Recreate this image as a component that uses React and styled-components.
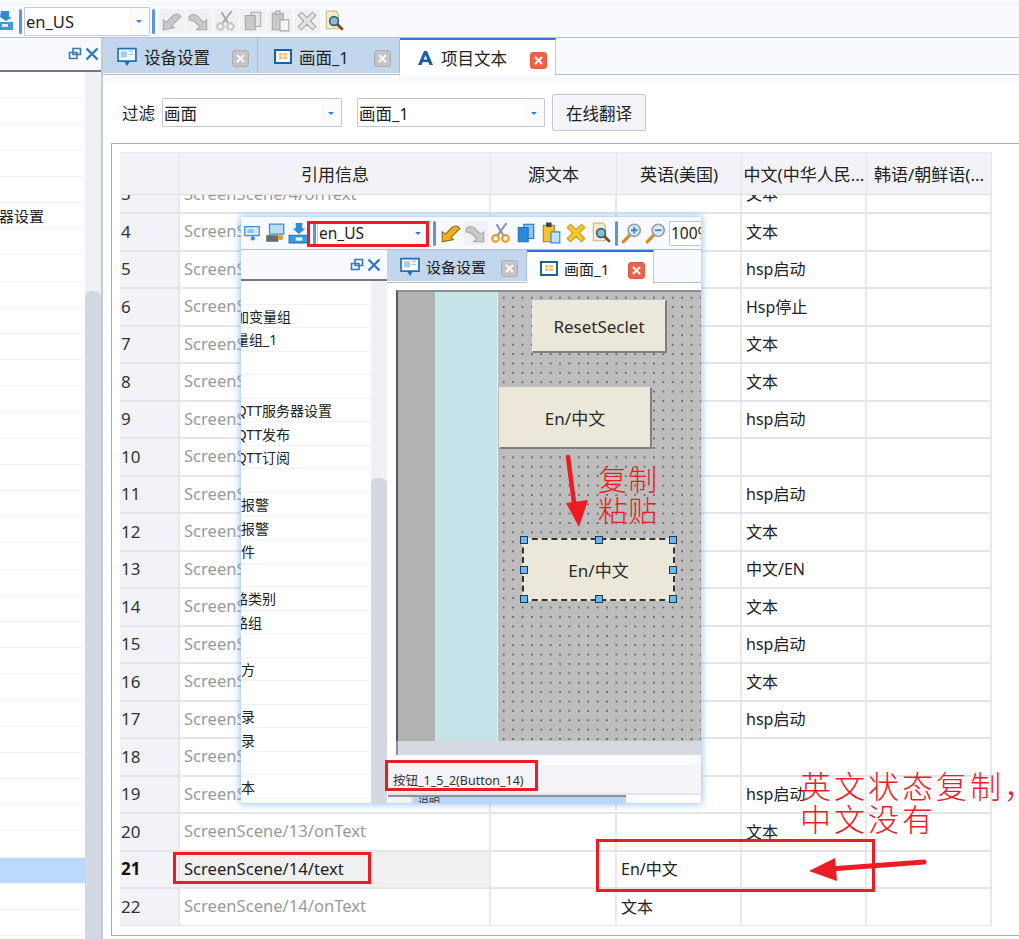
import React from 'react';
import styled, { createGlobalStyle } from 'styled-components';

const GlobalStyle = createGlobalStyle`
  html, body {
    margin: 0;
    padding: 0;
    background: #fff;
    overflow: hidden;
  }
  * { box-sizing: border-box; }
  body {
    font-family: "Noto Sans", "Noto Sans CJK SC", sans-serif;
    color: #222;
  }
`;

const Page = styled.div`
  position: relative;
  width: 1019px;
  height: 939px;
  overflow: hidden;
  background: #fff;
  display: flex;
  flex-direction: column;
`;

const TopStrip = styled.div`
  height: 5px;
  flex: none;
  background: #fbfbfe;
  border-bottom: 1px solid #f0f1f7;
`;

const Toolbar = styled.div`
  flex: none;
  display: flex;
  align-items: center;
  height: ${p => p.$height || 33}px;
  background: #f9fafe;
  border-bottom: 1px solid #b9bdd0;
  overflow: hidden;
`;

const IconSlot = styled.div`
  flex: none;
  width: ${p => p.$w || 24}px;
  height: 24px;
  margin-left: ${p => p.$ml || 0}px;
  margin-right: ${p => p.$mr || 0}px;
  display: flex;
  align-items: center;
  justify-content: center;
  background: ${p => (p.$disabled ? '#f1f1f3' : 'transparent')};
`;

const Grip = styled.div`
  flex: none;
  width: 3px;
  height: 25px;
  margin: 0 ${p => p.$mr || 3}px 0 ${p => p.$ml || 3}px;
  border-radius: 2px;
  background: #5b96dc;
`;

const Combo = styled.div`
  flex: none;
  display: flex;
  align-items: center;
  justify-content: space-between;
  width: ${p => p.$w}px;
  height: ${p => p.$h || 29}px;
  padding-left: 1px;
  background: #fff;
  border: 1px solid #c3c7d8;
  border-radius: 1px;
  font-size: ${p => p.$size || 16.5}px;
  color: #222;
  white-space: nowrap;
  overflow: hidden;
`;

const ComboArrow = styled.span`
  flex: none;
  width: 20px;
  align-self: stretch;
  position: relative;
  background: #fbfbfe;
  &::after {
    content: '';
    position: absolute;
    left: 7px;
    top: 50%;
    margin-top: -1px;
    border: 3px solid transparent;
    border-top: 3px solid #3a78d8;
    border-bottom: 0;
  }
`;

const Workspace = styled.div`
  flex: 1;
  min-height: 0;
  display: flex;
`;

const SidePanel = styled.div`
  flex: none;
  width: ${p => p.$w}px;
  display: flex;
  flex-direction: column;
  min-height: 0;
  border-right: ${p => (p.$border ? '2px solid #c7cad6' : 'none')};
  background: #fff;
`;

const PanelHeader = styled.div`
  flex: none;
  height: ${p => p.$h}px;
  display: flex;
  align-items: center;
  justify-content: flex-end;
  gap: 3px;
  padding-right: 2px;
  background: #f9fafe;
  border-bottom: 2px solid #75787f;
`;

const PanelBody = styled.div`
  flex: 1;
  min-height: 0;
  display: flex;
`;

const TreeList = styled.div`
  flex: 1;
  min-width: 0;
  overflow: hidden;
`;

const TreeRow = styled.div`
  height: ${p => p.$h}px;
  display: flex;
  align-items: center;
  white-space: nowrap;
  overflow: hidden;
  font-size: ${p => p.$size || 15}px;
  color: #222;
  background: ${p => (p.$selected ? '#bbd9fb' : '#fff')};
  border-bottom: 1px solid #f1f2f8;
`;

const TreeLabel = styled.span`
  margin-left: ${p => p.$shift}px;
`;

const ScrollTrack = styled.div`
  flex: none;
  width: ${p => p.$w}px;
  background: #f0f1f4;
  padding-top: ${p => p.$top}px;
  display: flex;
`;

const ScrollThumb = styled.div`
  flex: 1;
  background: #d3d9e3;
  border-radius: 6px 6px 0 0;
`;

const MainArea = styled.div`
  flex: 1;
  min-width: 0;
  display: flex;
  flex-direction: column;
`;

const TabBar = styled.div`
  flex: none;
  height: ${p => p.$h}px;
  display: flex;
  padding-left: ${p => p.$pl || 0}px;
  background: #f9fafe;
  border-bottom: 1px solid #b9bdd0;
`;

const Tab = styled.div`
  flex: none;
  width: ${p => p.$w}px;
  height: ${p => (p.$active ? p.$h + 3 : p.$h)}px;
  padding: 0 8px 0 ${p => p.$pl || 14}px;
  display: flex;
  align-items: center;
  gap: ${p => p.$gap || 7}px;
  position: relative;
  z-index: ${p => (p.$active ? 1 : 0)};
  font-size: ${p => p.$size || 16.5}px;
  color: #222;
  background: ${p => (p.$active ? '#fff' : '#c2d6ee')};
  border-top: 2px solid ${p => (p.$active ? '#2e74d3' : '#c2d6ee')};
  border-right: 1px solid ${p => (p.$active ? '#c3c7d8' : '#a9bdd6')};
`;

const TabText = styled.span`
  flex: 1;
  white-space: nowrap;
`;

const CloseBox = styled.span`
  flex: none;
  width: 17px;
  height: 17px;
  margin-top: 4px;
  border-radius: 3px;
  display: flex;
  align-items: center;
  justify-content: center;
  background: ${p => (p.$active ? '#e8654c' : '#c4c4c6')};
  border: 1px solid ${p => (p.$active ? '#dc5a42' : '#adadb0')};
`;

const TabBody = styled.div`
  flex: 1;
  min-height: 0;
  display: flex;
  flex-direction: column;
  border-top: 8px solid #f9fafe;
`;

const FilterBar = styled.div`
  flex: none;
  height: 59px;
  margin-bottom: 1px;
  padding-left: 19px;
  display: flex;
  align-items: center;
  font-size: 16.5px;
`;

const FilterLabel = styled.span`
  width: 40px;
  flex: none;
`;

const FilterGap = styled.span`
  width: ${p => p.$w}px;
  flex: none;
`;

const PlainButton = styled.button`
  flex: none;
  width: 94px;
  height: 37px;
  padding: 0;
  font: inherit;
  color: #222;
  background: #f5f5f9;
  border: 1px solid #c3c7d8;
  border-radius: 2px;
`;

const TableFrame = styled.div`
  margin-left: 8px;
  height: 793px;
  flex: none;
  padding: 8px 0 0 8px;
  border: 1px solid #a9adb9;
  border-right: none;
  overflow: hidden;
`;

const TableRow = styled.div`
  display: grid;
  grid-template-columns: 60px 311px 126px 125px 125px 125px;
  width: 872px;
  height: ${p => p.$h || 37.5}px;
`;

const TableBody = styled.div`
  height: 731px;
  overflow: hidden;
`;

const RowsShift = styled.div`
  margin-top: -18.5px;
`;

const HeadCell = styled.div`
  display: flex;
  align-items: center;
  justify-content: center;
  font-size: 17px;
  color: #222;
  white-space: nowrap;
  overflow: hidden;
  background: #f3f3f7;
  border-right: 1px solid #e4e4e9;
  border-bottom: 1px solid #e0e0e6;
  border-top: 1px solid #e8e8ec;
`;

const NumCell = styled.div`
  display: flex;
  align-items: center;
  padding-left: 1px;
  padding-bottom: 1px;
  font-size: 17px;
  font-weight: ${p => (p.$bold ? 700 : 400)};
  color: ${p => (p.$bold ? '#111' : '#333')};
  background: #f3f3f7;
  border-right: 2px solid #e6e6ea;
  border-bottom: 2px solid #e6e6ea;
`;

const Cell = styled.div`
  display: flex;
  align-items: center;
  padding-left: 4px;
  padding-bottom: 2px;
  font-size: ${p => p.$size || 16}px;
  white-space: nowrap;
  overflow: hidden;
  color: ${p => (p.$muted ? '#9a9a9a' : '#222')};
  background: ${p => (p.$shade ? '#f0f0f0' : '#fff')};
  border-right: 2px solid #e9e9ec;
  border-bottom: 2px solid #e6e6ea;
`;

/* pasted screenshot lying on top of the table */
const PastedWindow = styled.div`
  position: absolute;
  left: 241px;
  top: 217px;
  width: 460px;
  height: 586px;
  display: flex;
  flex-direction: column;
  overflow: hidden;
  background: #fff;
  box-shadow: 0 0 7px 1px rgba(110, 170, 245, 0.75);
`;

const PastedMain = styled.div`
  flex: 1;
  min-width: 0;
  display: flex;
  flex-direction: column;
`;

const CanvasArea = styled.div`
  flex: none;
  height: 458px;
  padding: 7px 0 0 9px;
  background: #fff;
`;

const CanvasBox = styled.div`
  height: 451px;
  display: flex;
  border-top: 2px solid #8d8f94;
  border-left: 2px solid #55575b;
`;

const GrayColumn = styled.div`
  flex: none;
  width: 37px;
  background: #b2b2b2;
`;

const CyanColumn = styled.div`
  flex: none;
  width: 63px;
  background: #c6e3e8;
  border-right: 1px solid #e8eef0;
`;

const DotGrid = styled.div`
  flex: 1;
  position: relative;
  background-color: #bdbdbd;
  background-image: radial-gradient(circle, #5c5c5c 0.6px, transparent 1px);
  background-size: 9.4px 9.4px;
  background-position: 1px 1px;
`;

const CanvasButton = styled.div`
  position: absolute;
  left: ${p => p.$x}px;
  top: ${p => p.$y}px;
  width: ${p => p.$w}px;
  height: ${p => p.$h}px;
  display: flex;
  align-items: center;
  justify-content: center;
  font-size: 17px;
  color: #2b2b2b;
  background: #ece8d9;
  border-right: 2px solid #7f7f7f;
  border-bottom: 2px solid #7f7f7f;
  border-top: 1px solid #e8e8e8;
  border-left: 1px solid #e8e8e8;
`;

const SelectedButton = styled(CanvasButton)`
  border: 2px dashed #333;
`;

const Handle = styled.span`
  position: absolute;
  left: ${p => p.$x}%;
  top: ${p => p.$y}%;
  width: 8px;
  height: 8px;
  margin: -4px 0 0 -4px;
  background: #6cb8ee;
  border: 1px solid #1d3a52;
`;

const HScroll = styled.div`
  flex: none;
  height: 14px;
  margin-left: 9px;
  background: #d4d9e2;
  border-left: 2px solid #8d8f94;
`;

const StatusGap = styled.div`
  flex: none;
  height: 10px;
  background: #fbfbfe;
`;

const StatusRow = styled.div`
  flex: none;
  height: 30px;
  padding: 0 0 0 6px;
  display: flex;
  align-items: center;
  font-size: 12.5px;
  color: #333;
  background: #f3f3f8;
  border-bottom: 2px solid #e4e5ec;
`;

const MiniGrid = styled.div`
  flex: 1;
  margin-left: 1px;
  width: 238px;
  display: flex;
  border-top: 2px solid #8e9096;
  background: #b8d7fb;
  overflow: hidden;
`;

const MiniHead = styled.span`
  flex: none;
  width: 24px;
  background: #f3f3f7;
`;

const MiniText = styled.span`
  padding-left: 6px;
  font-size: 11px;
  line-height: 12px;
  color: #333;
`;

const RedFrame = styled.div`
  position: absolute;
  left: ${p => p.$x}px;
  top: ${p => p.$y}px;
  width: ${p => p.$w}px;
  height: ${p => p.$h}px;
  border: 3px solid #ed1c24;
  pointer-events: none;
`;

const RedNote = styled.div`
  position: absolute;
  left: ${p => p.$x}px;
  top: ${p => p.$y}px;
  color: #ed1c24;
  font-family: "Noto Sans CJK SC", sans-serif;
  font-size: ${p => p.$size}px;
  line-height: ${p => p.$lh}px;
  letter-spacing: ${p => p.$ls}px;
  font-weight: 300;
  white-space: pre;
`;

const ArrowLayer = styled.svg`
  position: absolute;
  left: 0;
  top: 0;
  width: 1019px;
  height: 939px;
  pointer-events: none;
`;

const GRAY = { a: '#c9c9cb', b: '#a9a9ab', c: '#e4e4e6' };
const COLOR = { a: '#f3b21b', b: '#2c8ad8', c: '#d8ecfb' };

// toolbar glyphs, drawn in 20x20
const ToolIcon = ({ kind, off, size = 22 }) => {
  const c = off ? GRAY : COLOR;
  const dim = off ? GRAY.b : '#9a9a9a';
  return (
    <svg width={size} height={size} viewBox="0 0 20 20">
      {kind === 'undo' && (
        <path d="M2 18V9l3 2 6-6c2-2 5-2 7 1l-8 8 2 2z" fill={off ? GRAY.a : '#f2b01e'} stroke={off ? GRAY.b : '#8a6a1a'} strokeWidth="1" />
      )}
      {kind === 'redo' && (
        <path d="M1 6c3-3 6-2 8 0l5 5 3-2v9H8l3-3-6-5c-1-1-2-1-4-1z" fill={off ? GRAY.a : '#b3b3b3'} stroke={GRAY.b} strokeWidth="1" />
      )}
      {kind === 'cut' && (
        <g fill="none">
          <path d="M7 12L15 1M12 12L6 2" stroke={off ? GRAY.b : '#7d97b2'} strokeWidth="1.8" />
          <circle cx="5" cy="15" r="3" stroke={off ? GRAY.a : '#ee9c22'} strokeWidth="2" />
          <circle cx="14" cy="15" r="3" stroke={off ? GRAY.a : '#ee9c22'} strokeWidth="2" />
        </g>
      )}
      {kind === 'copy' && (
        <g stroke={off ? GRAY.b : '#1e70bd'} strokeWidth="1">
          <path d="M8 2h9v13H8z" fill={off ? GRAY.c : '#8cc4ee'} />
          <path d="M3 5h9v13H3z" fill={off ? GRAY.a : '#2c8ad8'} />
        </g>
      )}
      {kind === 'paste' && (
        <g strokeWidth="1">
          <path d="M3 3h10v15H3z" fill={off ? GRAY.a : '#f2c230'} stroke={off ? GRAY.b : '#a8821c'} />
          <path d="M6 1h4v3H6z" fill={off ? GRAY.c : '#39434f'} stroke={off ? GRAY.b : '#39434f'} />
          <path d="M10 9h8v10h-8z" fill={off ? '#f4f4f4' : '#bfe0f7'} stroke={off ? GRAY.b : '#2c8ad8'} />
        </g>
      )}
      {kind === 'del' && (
        <path d="M5 2l5 5 5-5 3 3-5 5 5 5-3 3-5-5-5 5-3-3 5-5-5-5z" fill={off ? GRAY.c : '#f6c92f'} stroke={off ? GRAY.b : '#cf9d14'} strokeWidth="1" />
      )}
      {kind === 'find' && (
        <g>
          <path d="M3 1h9l2 3v13H3z" fill="#f6eccb" stroke="#cbb98a" strokeWidth="1" />
          <circle cx="10" cy="10" r="4" fill="#7fc0d8" stroke="#43606c" strokeWidth="1.5" />
          <path d="M13 13l5 5" stroke="#7a4a20" strokeWidth="2.4" />
        </g>
      )}
      {(kind === 'zoomIn' || kind === 'zoomOut') && (
        <g>
          <path d="M2 18l6-6" stroke="#cf8a33" strokeWidth="3" strokeLinecap="round" />
          <circle cx="12" cy="7.5" r="5.5" fill="#d9e9f8" stroke={dim} strokeWidth="1.5" />
          <path d={kind === 'zoomIn' ? 'M9 7.5h6M12 4.5v6' : 'M9 7.5h6'} stroke={c.b} strokeWidth="1.6" />
        </g>
      )}
      {kind === 'device' && (
        <g>
          <path d="M2 3h16v10H2z" fill="#d6ecfb" stroke="#3c8fd0" strokeWidth="1.4" />
          <path d="M5 6h7v4H5z" fill="#8cc4ee" />
          <circle cx="11" cy="16" r="2.4" fill="#3c8fd0" />
        </g>
      )}
      {kind === 'monitor' && (
        <g>
          <path d="M5 2h13v9H5z" fill="#bcdcf6" stroke="#3c8fd0" strokeWidth="1.2" />
          <path d="M2 12h11v6H2z" fill="#6b6b6b" />
          <circle cx="15" cy="14" r="2.4" fill="#f09a2b" />
        </g>
      )}
      {kind === 'download' && (
        <g>
          <path d="M7 1h6v5h3l-6 5-6-5h3z" fill="#2c8ad8" />
          <path d="M1 12h18v7H1z" fill="#3a9be0" stroke="#1e70bd" strokeWidth="1" />
          <path d="M7 14h6v3H7z" fill="#e6f2fb" />
        </g>
      )}
    </svg>
  );
};

const ScreenIcon = () => (
  <svg width="20" height="20" viewBox="0 0 19 19">
    <path d="M1 1.5h17v12H1z" fill="#fff" stroke="#1f6fb5" strokeWidth="1.6" />
    <path d="M3.5 4h6v6h-6z" fill="#a8cdec" />
    <path d="M11 4h4.5M11 7h4.5" stroke="#9fc3e0" strokeWidth="1.2" />
    <path d="M7 14h5l-2.5 4z" fill="#1f6fb5" />
  </svg>
);

const PageIcon = () => (
  <svg width="18" height="15" viewBox="0 0 18 15">
    <path d="M1 1h16v13H1z" fill="#fff" stroke="#16639f" strokeWidth="2" />
    <path d="M5 4h8v6H5z" fill="#f5c26b" />
    <path d="M9 4v6M5 7h8" stroke="#fff" strokeWidth="0.8" />
  </svg>
);

const LetterIcon = () => (
  <svg width="17" height="16" viewBox="0 0 17 16">
    <path d="M1 15L7 1h3l6 14h-3.6l-1.2-3H5.8l-1.2 3zM6.8 9.5h3.4L8.5 5z" fill="#1a5ea5" fillRule="evenodd" />
  </svg>
);

const CloseMark = () => (
  <svg width="9" height="9" viewBox="0 0 9 9">
    <path d="M1 1l7 7M8 1L1 8" stroke="#fff" strokeWidth="2" />
  </svg>
);

const PanelButtons = () => (
  <>
    <svg width="14" height="14" viewBox="0 0 14 14">
      <path d="M5 1.5h7.5v6H5zM1.5 5.5h7.5v6H1.5z" fill="#f9fafe" stroke="#3b76b8" strokeWidth="1.6" />
    </svg>
    <svg width="14" height="14" viewBox="0 0 14 14">
      <path d="M1.5 1.5l11 11M12.5 1.5l-11 11" stroke="#2f78c8" strokeWidth="2.4" />
    </svg>
  </>
);

const TOOL_KINDS = ['undo', 'redo', 'cut', 'copy', 'paste', 'del', 'find'];

const ROWS = [
  [3, 'ScreenScene/4/onText', '', '文本'],
  [4, 'ScreenScene/5/onText', '', '文本'],
  [5, 'ScreenScene/6/text', '', 'hsp启动'],
  [6, 'ScreenScene/6/onText', '', 'Hsp停止'],
  [7, 'ScreenScene/7/text', '', '文本'],
  [8, 'ScreenScene/7/onText', '', '文本'],
  [9, 'ScreenScene/8/text', '', 'hsp启动'],
  [10, 'ScreenScene/8/onText', '', ''],
  [11, 'ScreenScene/9/text', '', 'hsp启动'],
  [12, 'ScreenScene/9/onText', '', '文本'],
  [13, 'ScreenScene/10/text', '', '中文/EN'],
  [14, 'ScreenScene/10/onText', '', '文本'],
  [15, 'ScreenScene/11/text', '', 'hsp启动'],
  [16, 'ScreenScene/11/onText', '', '文本'],
  [17, 'ScreenScene/12/text', '', 'hsp启动'],
  [18, 'ScreenScene/12/onText', '', ''],
  [19, 'ScreenScene/13/text', '', 'hsp启动'],
  [20, 'ScreenScene/13/onText', '', '文本'],
  [21, 'ScreenScene/14/text', 'En/中文', '', true],
  [22, 'ScreenScene/14/onText', '文本', ''],
];

const PASTED_TREE = {
  1: ['添加变量组', -20],
  2: ['变量组_1', -20],
  5: ['MQTT服务器设置', -18],
  6: ['MQTT发布', -18],
  7: ['MQTT订阅', -18],
  9: ['报警', 0],
  10: ['报警', 0],
  11: ['件', 0],
  13: ['路类别', -7],
  14: ['路组', -7],
  16: ['方', 0],
  18: ['录', 0],
  19: ['录', 0],
  21: ['本', 0],
};

export default function App() {
  return (
    <Page>
      <GlobalStyle />
      <TopStrip />
      <Toolbar>
        <IconSlot $w={14}>
          <svg width="14" height="20" viewBox="0 0 14 20">
            <path d="M1 0h8v6h3l-6 4-6-4z" fill="#2c8ad8" />
            <path d="M0 11h13v8H0z" fill="#3a9be0" />
            <path d="M2 13h6v3H2z" fill="#e6f2fb" />
          </svg>
        </IconSlot>
        <Grip $ml={5} $mr={2} />
        <Combo $w={126}>
          en_US
          <ComboArrow />
        </Combo>
        <Grip $ml={2} $mr={4} />
        {TOOL_KINDS.map((kind, i) => (
          <IconSlot key={kind} $w={26} $ml={i ? 1 : 0} $disabled={kind !== 'find'}>
            <ToolIcon kind={kind} off={kind !== 'find'} />
          </IconSlot>
        ))}
      </Toolbar>
      <Workspace>
        <SidePanel $w={103} $border>
          <PanelHeader $h={34}>
            <PanelButtons />
          </PanelHeader>
          <PanelBody>
            <TreeList>
              {Array.from({ length: 34 }, (_, i) => (
                <TreeRow key={i} $h={26.2} $selected={i === 30}>
                  {i === 5 && <TreeLabel $shift={-31}>服务器设置</TreeLabel>}
                </TreeRow>
              ))}
            </TreeList>
            <ScrollTrack $w={16} $top={219}>
              <ScrollThumb />
            </ScrollTrack>
          </PanelBody>
        </SidePanel>
        <MainArea>
          <TabBar $h={37}>
            <Tab $w={155} $h={35}>
              <ScreenIcon />
              <TabText>设备设置</TabText>
              <CloseBox><CloseMark /></CloseBox>
            </Tab>
            <Tab $w={142} $h={35} $pl={16}>
              <PageIcon />
              <TabText>画面_1</TabText>
              <CloseBox><CloseMark /></CloseBox>
            </Tab>
            <Tab $w={156} $h={35} $pl={17} $active>
              <LetterIcon />
              <TabText>项目文本</TabText>
              <CloseBox $active><CloseMark /></CloseBox>
            </Tab>
          </TabBar>
          <TabBody>
            <FilterBar>
              <FilterLabel>过滤</FilterLabel>
              <Combo $w={180} $h={29}>
                画面
                <ComboArrow />
              </Combo>
              <FilterGap $w={15} />
              <Combo $w={188} $h={29}>
                画面_1
                <ComboArrow />
              </Combo>
              <FilterGap $w={7} />
              <PlainButton>在线翻译</PlainButton>
            </FilterBar>
            <TableFrame>
              <TableRow $h={43}>
                <HeadCell />
                <HeadCell>引用信息</HeadCell>
                <HeadCell>源文本</HeadCell>
                <HeadCell>英语(美国)</HeadCell>
                <HeadCell>中文(中华人民...</HeadCell>
                <HeadCell>韩语/朝鲜语(...</HeadCell>
              </TableRow>
              <TableBody>
                <RowsShift>
                  {ROWS.map(([num, ref, en, zh, current]) => (
                    <TableRow key={num}>
                      <NumCell $bold={current}>{num}</NumCell>
                      <Cell $muted={!current} $shade={current} $size={16.6}>{ref}</Cell>
                      <Cell />
                      <Cell>{en}</Cell>
                      <Cell>{zh}</Cell>
                      <Cell />
                    </TableRow>
                  ))}
                </RowsShift>
              </TableBody>
            </TableFrame>
          </TabBody>
        </MainArea>
      </Workspace>

      <PastedWindow>
        <Toolbar $height={33}>
          <IconSlot $w={18} $ml={2}><ToolIcon kind="device" /></IconSlot>
          <IconSlot $w={22} $ml={3}><ToolIcon kind="monitor" /></IconSlot>
          <IconSlot $w={22} $ml={2}><ToolIcon kind="download" /></IconSlot>
          <Grip $ml={3} $mr={1} />
          <Combo $w={112} $h={25} $size={15.5}>
            en_US
            <ComboArrow />
          </Combo>
          <Grip $ml={4} $mr={2} />
          {TOOL_KINDS.map(kind => (
            <IconSlot key={kind} $w={24} $ml={1} $disabled={kind === 'redo'}>
              <ToolIcon kind={kind} off={kind === 'redo'} />
            </IconSlot>
          ))}
          <Grip $ml={2} $mr={3} />
          <IconSlot $w={22} $mr={2}><ToolIcon kind="zoomIn" /></IconSlot>
          <IconSlot $w={22} $mr={2}><ToolIcon kind="zoomOut" /></IconSlot>
          <Combo $w={60} $h={25} $size={15.5}>100%</Combo>
        </Toolbar>
        <Workspace>
          <SidePanel $w={146}>
            <PanelHeader $h={31}>
              <PanelButtons />
              <IconSlot $w={1} />
            </PanelHeader>
            <PanelBody>
              <TreeList>
                {Array.from({ length: 22 }, (_, i) => (
                  <TreeRow key={i} $h={23.55} $size={14}>
                    {PASTED_TREE[i] && (
                      <TreeLabel $shift={PASTED_TREE[i][1]}>{PASTED_TREE[i][0]}</TreeLabel>
                    )}
                  </TreeRow>
                ))}
              </TreeList>
              <ScrollTrack $w={16} $top={197}>
                <ScrollThumb />
              </ScrollTrack>
            </PanelBody>
          </SidePanel>
          <PastedMain>
            <TabBar $h={33}>
              <Tab $w={140} $h={31} $pl={13} $size={15} $gap={6}>
                <ScreenIcon />
                <TabText>设备设置</TabText>
                <CloseBox><CloseMark /></CloseBox>
              </Tab>
              <Tab $w={127} $h={31} $pl={13} $size={15} $gap={6} $active>
                <PageIcon />
                <TabText>画面_1</TabText>
                <CloseBox $active><CloseMark /></CloseBox>
              </Tab>
            </TabBar>
            <CanvasArea>
              <CanvasBox>
                <GrayColumn />
                <CyanColumn />
                <DotGrid>
                  <CanvasButton $x={34} $y={8} $w={135} $h={53}>ResetSeclet</CanvasButton>
                  <CanvasButton $x={1} $y={95} $w={153} $h={62}>En/中文</CanvasButton>
                  <SelectedButton $x={24} $y={246} $w={153} $h={63}>
                    En/中文
                    <Handle $x={0} $y={0} />
                    <Handle $x={50} $y={0} />
                    <Handle $x={100} $y={0} />
                    <Handle $x={0} $y={50} />
                    <Handle $x={100} $y={50} />
                    <Handle $x={0} $y={100} />
                    <Handle $x={50} $y={100} />
                    <Handle $x={100} $y={100} />
                  </SelectedButton>
                </DotGrid>
              </CanvasBox>
            </CanvasArea>
            <HScroll />
            <StatusGap />
            <StatusRow>按钮_1_5_2(Button_14)</StatusRow>
            <MiniGrid>
              <MiniHead />
              <MiniText>说明</MiniText>
            </MiniGrid>
          </PastedMain>
        </Workspace>
      </PastedWindow>

      <RedFrame $x={307} $y={221} $w={122} $h={26} />
      <RedFrame $x={385} $y={760} $w={153} $h={31} />
      <RedFrame $x={173} $y={852} $w={198} $h={32} />
      <RedFrame $x={596} $y={839} $w={279} $h={53} />
      <RedNote $x={598} $y={463} $size={29} $lh={31} $ls={1}>{'复制\n粘贴'}</RedNote>
      <RedNote $x={800} $y={768} $size={31} $lh={33} $ls={3}>{'英文状态复制，\n中文没有'}</RedNote>
      <ArrowLayer viewBox="0 0 1019 939">
        <path d="M568 457L575 510" stroke="#ed1c24" strokeWidth="4.5" strokeLinecap="round" />
        <path d="M566 503L588 500L579 527z" fill="#ed1c24" />
        <path d="M924 862L830 869" stroke="#ed1c24" strokeWidth="5" strokeLinecap="round" />
        <path d="M809 871L835 858L837 881z" fill="#ed1c24" />
      </ArrowLayer>
    </Page>
  );
}
